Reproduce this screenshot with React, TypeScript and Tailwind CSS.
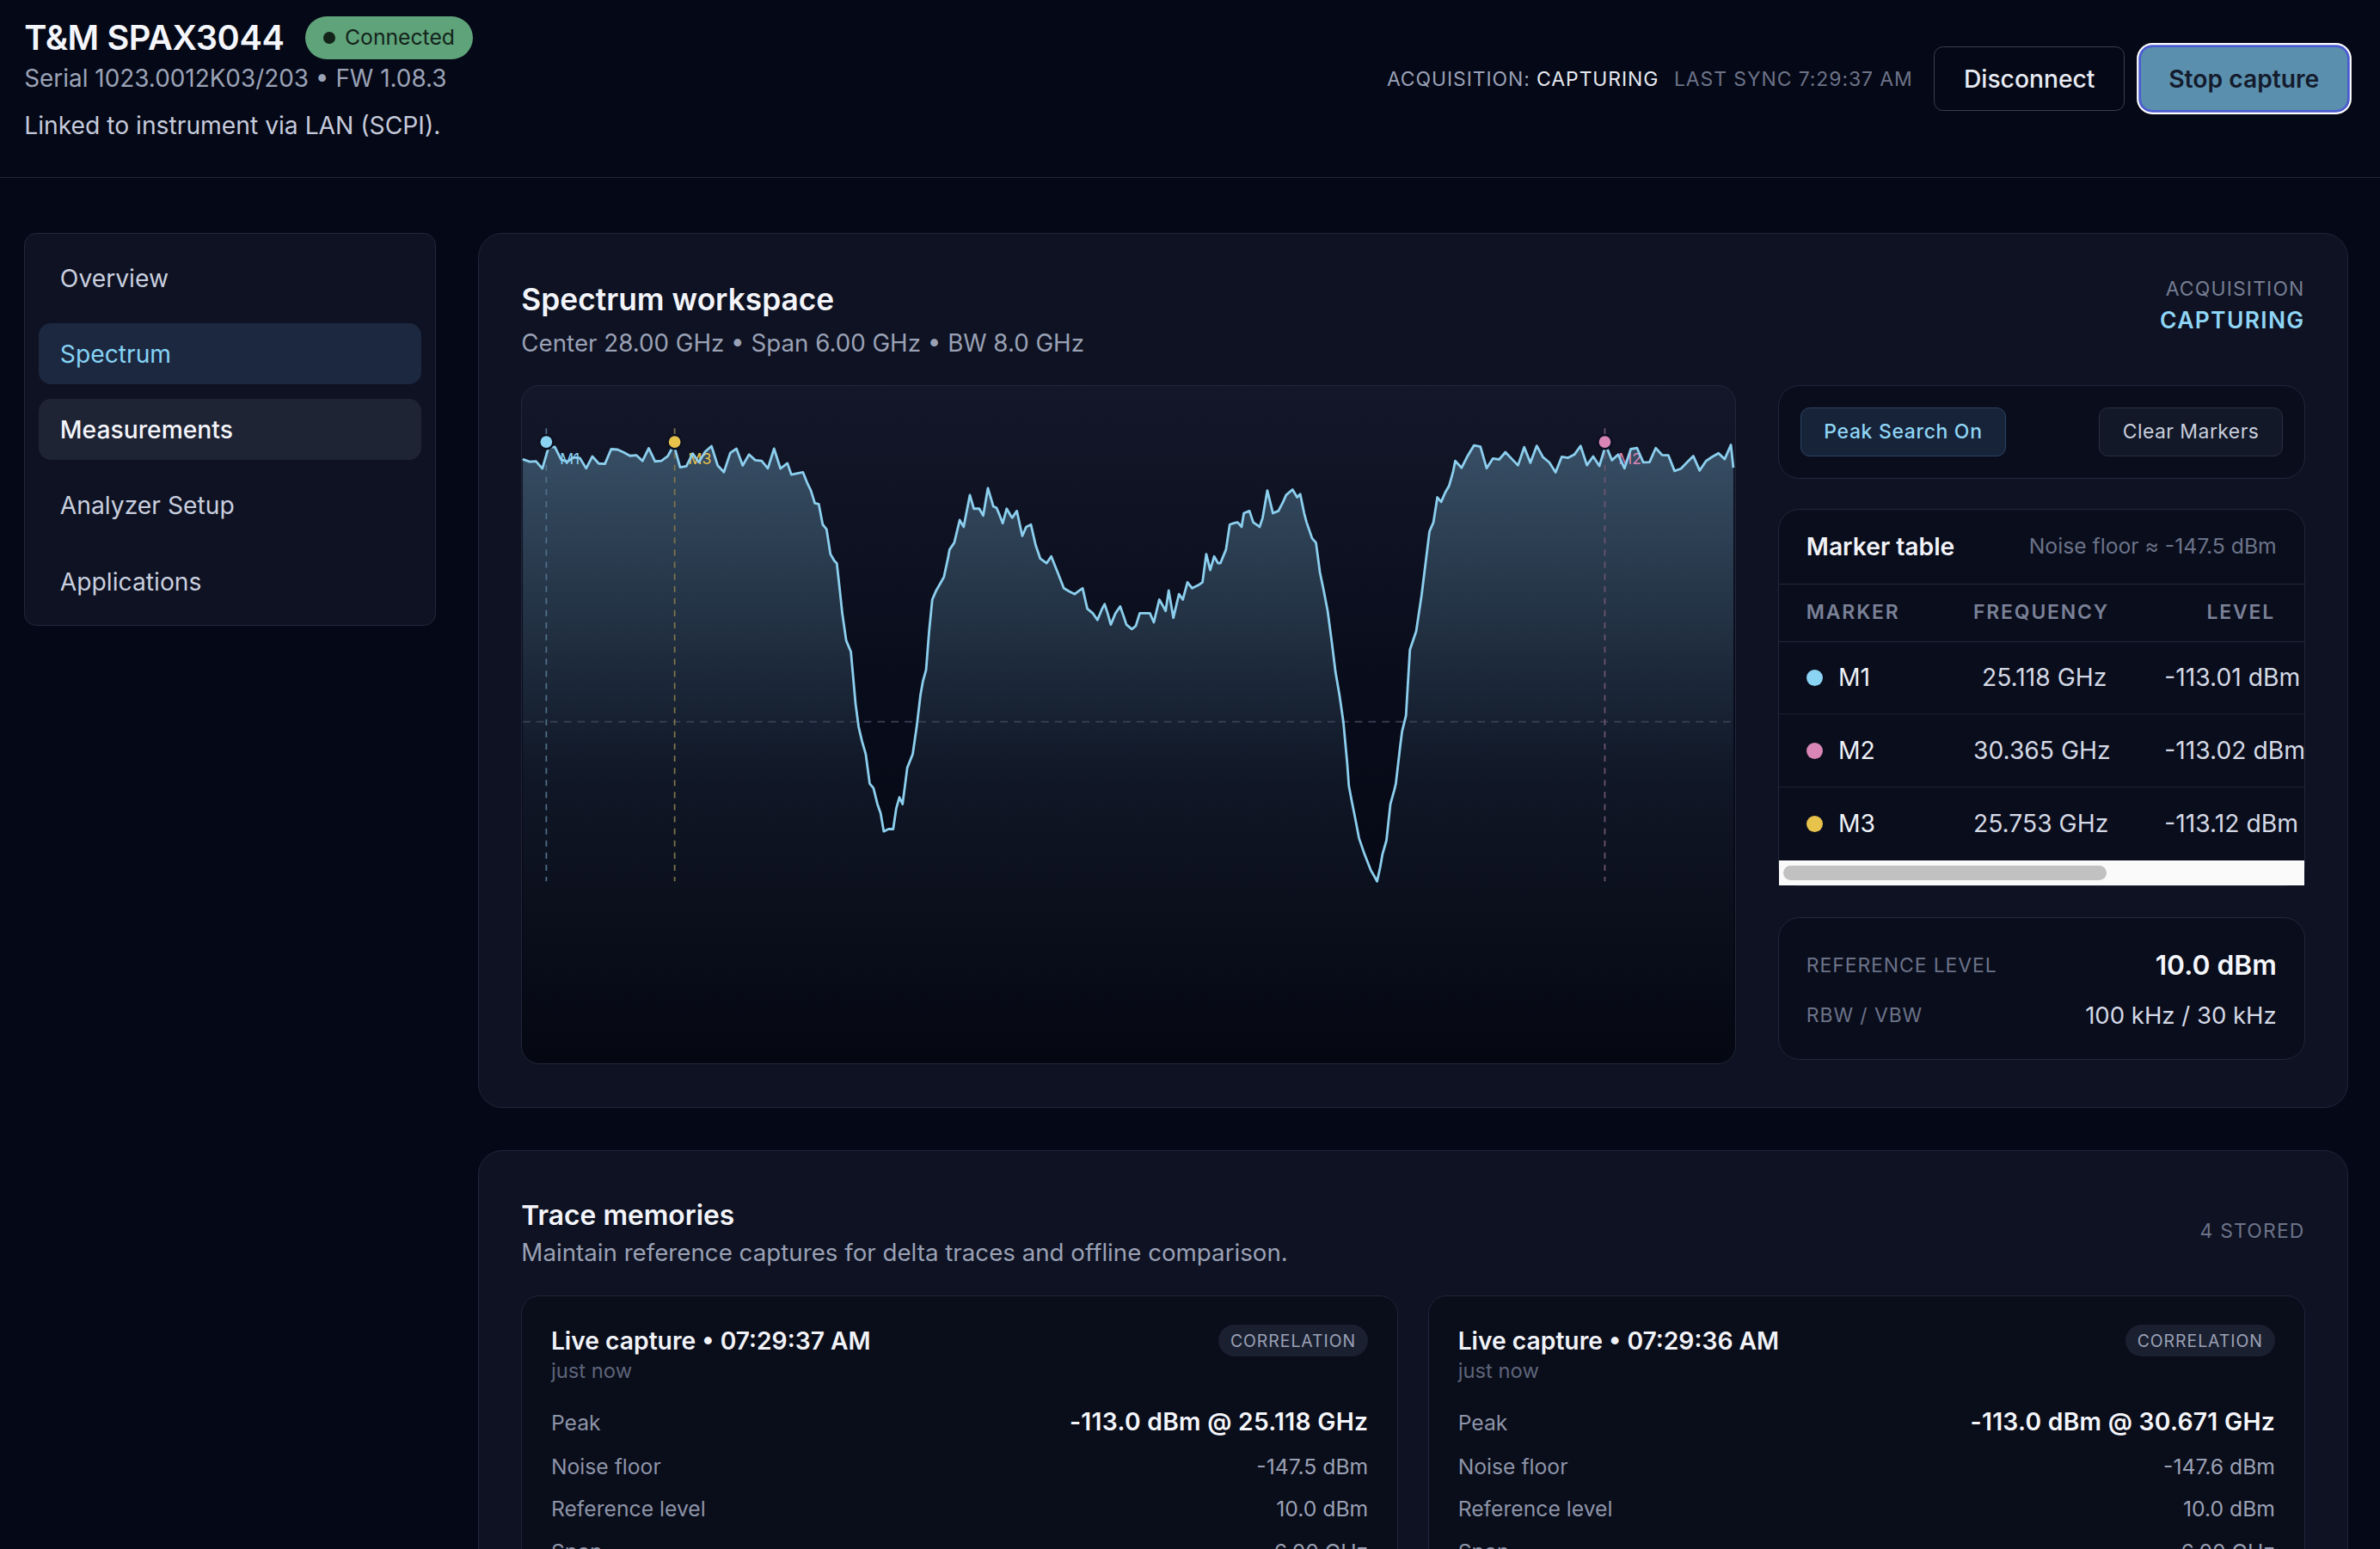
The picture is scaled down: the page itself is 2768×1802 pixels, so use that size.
import React from "react";

const KEY: [number, number][] = [
  [345, 190], [350, 215], [358, 212], [365, 210], [370, 232], [375, 250], [380, 278], [385, 280],
  [390, 325], [395, 335], [400, 390], [405, 405], [408, 410], [412, 470], [415, 520], [420, 580],
  [426, 605], [432, 720], [436, 770], [440, 800], [445, 830], [450, 895], [455, 905], [460, 940],
  [464, 960], [468, 1000], [474, 995], [480, 995], [484, 950], [488, 925], [492, 940], [498, 860],
  [505, 830], [510, 770], [515, 700], [518, 670], [522, 645], [526, 560], [530, 490], [535, 470],
  [540, 455], [545, 440], [550, 400], [552, 380], [558, 365], [565, 315], [570, 330], [578, 260],
  [583, 290], [590, 290], [595, 305], [601, 245], [608, 285], [612, 288], [615, 300], [620, 322],
  [625, 290], [630, 305], [632, 310], [638, 295], [645, 350], [650, 330], [656, 325], [662, 370],
  [668, 400], [676, 410], [682, 395], [690, 430], [698, 465], [705, 472], [712, 478], [718, 470],
  [722, 465], [728, 510], [735, 520], [741, 535], [747, 510], [750, 500], [754, 520], [758, 545],
  [764, 520], [770, 505], [775, 530], [778, 545], [785, 555], [790, 548], [795, 520], [808, 520],
  [813, 540], [820, 490], [825, 505], [828, 515], [832, 470], [838, 530], [845, 478], [850, 490],
  [856, 452], [862, 465], [870, 458], [875, 452], [880, 390], [885, 425], [890, 395], [895, 410],
  [898, 410], [905, 380], [910, 325], [915, 322], [920, 320], [925, 330], [928, 300], [935, 295],
  [940, 320], [948, 330], [952, 310], [958, 250], [965, 300], [972, 295], [978, 275], [982, 260],
  [990, 248], [996, 265], [1000, 258], [1005, 300], [1008, 320], [1015, 355], [1020, 365],
  [1025, 430], [1030, 470], [1035, 515], [1040, 580], [1045, 650], [1050, 700], [1055, 760],
  [1060, 850], [1062, 900], [1066, 935], [1070, 970], [1075, 1015], [1082, 1050], [1090, 1085],
  [1095, 1100], [1098, 1110], [1102, 1080], [1105, 1050], [1110, 1020], [1115, 940], [1120, 910],
  [1122, 895], [1127, 820], [1130, 780], [1135, 745], [1138, 660], [1140, 600], [1148, 560],
  [1155, 480], [1160, 410], [1165, 340], [1170, 320], [1175, 265], [1180, 275], [1185, 255],
  [1190, 240], [1195, 210], [1198, 185],
];

function mulberry32(seed: number) {
  let a = seed;
  return function () {
    a |= 0;
    a = (a + 0x6d2b79f5) | 0;
    let t = Math.imul(a ^ (a >>> 15), 1 | a);
    t = (t + Math.imul(t ^ (t >>> 7), 61 | t)) ^ t;
    return ((t ^ (t >>> 14)) >>> 0) / 4294967296;
  };
}

function buildTrace() {
  const rnd = mulberry32(11);
  const pts: [number, number][] = [];
  const noise = (from: number, to: number, forced: [number, number][]) => {
    for (let zx = from; zx <= to; zx += 8) {
      let zy = 180 + (rnd() - 0.5) * 62;
      for (const [fx, fy] of forced) if (Math.abs(zx - fx) < 4) zy = fy;
      pts.push([zx, zy]);
    }
  };
  noise(0, 340, [[37, 155], [201, 150]]);
  KEY.forEach((p) => pts.push(p));
  noise(1206, 1550, [[1389, 150]]);
  pts.push([1553, 200]);
  return pts.map(([zx, zy]) => [Math.max(0, zx * 0.5167 - 3.66), zy * 0.3 - 6] as [number, number]);
}

const TRACE = buildTrace();
const LINE = TRACE.map(([x, y], i) => `${i === 0 ? "M" : "L"}${x.toFixed(1)} ${y.toFixed(1)}`).join(" ");
const AREA = `${LINE} L799 447 L0 447 Z`;

const MARKERS = [
  { id: "M1", x: 15.5, color: "#8ad3f2", line: "#4f6f89" },
  { id: "M3", x: 100.2, color: "#e8c34c", line: "#7e744a" },
  { id: "M2", x: 714.0, color: "#d986b6", line: "#6c5470" },
];

function SpectrumChart() {
  return (
    <div className="h-[447.5px] min-w-0 flex-1 overflow-hidden rounded-xl border border-[#22273a] bg-gradient-to-b from-[#131729] via-[#080b19] to-[#050712]">
      <svg viewBox="0 0 799 447" className="block h-full w-full">
        <defs>
          <linearGradient id="fillGrad" x1="0" y1="0" x2="0" y2="1">
            <stop offset="0" stopColor="#8fd3f4" stopOpacity="0.3" />
            <stop offset="0.55" stopColor="#8fd3f4" stopOpacity="0.06" />
            <stop offset="1" stopColor="#8fd3f4" stopOpacity="0" />
          </linearGradient>
        </defs>
        <path d={AREA} fill="url(#fillGrad)" />
        <line x1="0" y1="221.7" x2="799" y2="221.7" stroke="#3a4055" strokeWidth="1" strokeDasharray="5 4" />
        {MARKERS.map((m) => (
          <g key={m.id}>
            <line x1={m.x} y1="28" x2={m.x} y2="327" stroke={m.line} strokeWidth="1" strokeDasharray="4 4" />
            <text x={m.x + 9} y="51.5" fontSize="10" fill={m.color} fontFamily="Inter, sans-serif">
              {m.id}
            </text>
          </g>
        ))}
        <path d={LINE} fill="none" stroke="#8ccfee" strokeWidth="1.6" strokeLinejoin="round" />
        {MARKERS.map((m) => (
          <circle key={m.id} cx={m.x} cy="36.9" r="4.6" fill={m.color} stroke="#0d1020" strokeWidth="1.4" />
        ))}
      </svg>
    </div>
  );
}

const NAV = ["Overview", "Spectrum", "Measurements", "Analyzer Setup", "Applications"];

function Sidebar() {
  return (
    <nav className="flex w-[271px] shrink-0 flex-col gap-2.5 rounded-lg border border-[#22273a] bg-[#0e1222] p-[9px]">
      {NAV.map((item) => {
        const cls =
          item === "Spectrum"
            ? "bg-[#1c2840] text-[#86d3f5]"
            : item === "Measurements"
            ? "bg-[#1f2435] font-medium text-[#f3f5fa]"
            : "text-[#c9cfdf]";
        return (
          <div key={item} className={`flex h-10 items-center rounded-lg px-3.5 pt-px text-base leading-[22px] ${cls}`}>
            {item}
          </div>
        );
      })}
    </nav>
  );
}

const ROWS = [
  { id: "M1", color: "#8ad3f2", freq: "25.118 GHz", level: "-113.01 dBm" },
  { id: "M2", color: "#d986b6", freq: "30.365 GHz", level: "-113.02 dBm" },
  { id: "M3", color: "#e8c34c", freq: "25.753 GHz", level: "-113.12 dBm" },
];

function SidePanel() {
  return (
    <div className="flex w-[347px] shrink-0 flex-col gap-5">
      <div className="flex items-center justify-between rounded-[14px] border border-[#22273a] bg-[#0a0d1c] p-3.5">
        <button className="rounded-md border border-[#2b4562] bg-[#172339] px-[15px] py-1.5 text-[13px] leading-[19px] font-medium tracking-[0.03em] text-[#8fd5f5]">
          Peak Search On
        </button>
        <button className="rounded-md border border-[#292f42] bg-[#131828] px-[15px] py-1.5 text-[13px] leading-[19px] tracking-[0.02em] text-[#c9cfdd]">
          Clear Markers
        </button>
      </div>

      <div className="rounded-[14px] border border-[#22273a] bg-[#0a0d1c]">
        <div className="flex items-center justify-between border-b border-[#22273a] px-[18px] py-[13.5px]">
          <span className="text-base leading-[22px] font-semibold text-[#f1f3f8]">Marker table</span>
          <span className="text-[14px] leading-[18px] text-[#6b7389]">Noise floor ≈ -147.5 dBm</span>
        </div>
        <div className="overflow-hidden">
          <div className="flex h-[37.6px] items-center border-b border-[#22273a] pl-[18px] text-[13px] leading-[18px] font-semibold tracking-[0.08em] text-[#7a8197]">
            <span className="w-[110px]">MARKER</span>
            <span className="w-[88px] text-right">FREQUENCY</span>
            <span className="flex-1 pr-[19px] text-right">LEVEL</span>
          </div>
          {ROWS.map((r, i) => (
            <div
              key={r.id}
              className={`flex h-12 items-center pl-[18px] text-base leading-[22px] text-[#d4d9e5] ${
                i < ROWS.length - 1 ? "border-b border-[#1c2133]" : ""
              }`}
            >
              <span className="flex w-[110px] shrink-0 items-center gap-2.5 text-[#eef1f6]">
                <span className="size-[11px] rounded-full" style={{ backgroundColor: r.color }} />
                {r.id}
              </span>
              <span className="w-[88px] shrink-0 whitespace-nowrap text-right">{r.freq}</span>
              <span className="shrink-0 whitespace-nowrap pl-[38px]">{r.level}</span>
            </div>
          ))}
        </div>
        <div className="flex h-[16.7px] items-center bg-[#fafafa] px-[3px]">
          <div className="h-[9.3px] w-[213px] rounded-full bg-[#c1c1c1]" />
        </div>
      </div>

      <div className="flex flex-col gap-2 rounded-[14px] border border-[#22273a] bg-[#0a0d1c] px-[18px] py-[17.5px]">
        <div className="flex h-7 items-center justify-between">
          <span className="text-[13px] uppercase tracking-[0.04em] text-[#6b7389]">Reference level</span>
          <span className="text-lg leading-7 font-semibold text-[#f4f6fb]">10.0 dBm</span>
        </div>
        <div className="flex h-[22px] items-center justify-between">
          <span className="text-[13px] uppercase tracking-[0.04em] text-[#6b7389]">RBW / VBW</span>
          <span className="text-[15.6px] leading-[22px] text-[#d4d9e5]">100 kHz / 30 kHz</span>
        </div>
      </div>
    </div>
  );
}

const MEMS = [
  { time: "07:29:37 AM", peak: "-113.0 dBm @ 25.118 GHz", noise: "-147.5 dBm" },
  { time: "07:29:36 AM", peak: "-113.0 dBm @ 30.671 GHz", noise: "-147.6 dBm" },
  { time: "07:29:35 AM", peak: "-113.1 dBm @ 25.753 GHz", noise: "-147.4 dBm" },
  { time: "07:29:34 AM", peak: "-113.0 dBm @ 30.365 GHz", noise: "-147.5 dBm" },
];

function MemoryCard({ m }: { m: (typeof MEMS)[number] }) {
  return (
    <div className="rounded-xl border border-[#20253a] bg-[#0a0d1a] p-[19px]">
      <div className="flex items-start justify-between">
        <div>
          <div className="text-base leading-[22px] font-semibold text-[#f1f3f8]">Live capture • {m.time}</div>
          <div className="text-[13.5px] leading-[17px] text-[#5d6479]">just now</div>
        </div>
        <span className="rounded-full bg-[#1b2031] px-2 py-[2px] text-[11px] leading-[17px] uppercase tracking-[0.05em] text-[#9aa1b5]">
          Correlation
        </span>
      </div>
      <div className="mt-[14px] flex flex-col gap-2">
        <div className="flex items-baseline justify-between">
          <span className="text-[14px] leading-[22px] text-[#8d94a8]">Peak</span>
          <span className="text-base leading-[22px] font-semibold tracking-[0.01em] text-[#f4f6fb]">{m.peak}</span>
        </div>
        <div className="flex items-baseline justify-between text-[14px] leading-5">
          <span className="text-[#8d94a8]">Noise floor</span>
          <span className="text-[#9aa1b5]">{m.noise}</span>
        </div>
        <div className="flex items-baseline justify-between text-[14px] leading-5">
          <span className="text-[#8d94a8]">Reference level</span>
          <span className="text-[#9aa1b5]">10.0 dBm</span>
        </div>
        <div className="flex items-baseline justify-between text-[14px] leading-5">
          <span className="text-[#8d94a8]">Span</span>
          <span className="text-[#9aa1b5]">6.00 GHz</span>
        </div>
      </div>
    </div>
  );
}

export default function App() {
  return (
    <div className="h-screen overflow-hidden bg-[#050816]">
      <div className="[zoom:1.765] [font-family:Inter,'Noto_Sans',sans-serif] text-[#e5e8f0] antialiased">
        <header className="flex items-center justify-between border-b border-[#22273a] pt-[9px] pr-[21px] pb-[22px] pl-4">
          <div>
            <div className="flex items-center gap-3.5">
              <h1 className="text-[22.5px] leading-8 font-semibold tracking-[-0.01em] text-[#f4f6fb]">T&amp;M SPAX3044</h1>
              <span className="flex items-center gap-1.5 rounded-full bg-[#5fa37a] px-3 py-1 text-sm leading-5 text-[#13231a]">
                <span className="size-2 rounded-full bg-[#13231a]" />
                Connected
              </span>
            </div>
            <p className="text-[15.8px] leading-[22px] text-[#9ba3b7]">Serial 1023.0012K03/203 • FW 1.08.3</p>
            <p className="mt-2 text-base leading-6 text-[#c5cbdc]">Linked to instrument via LAN (SCPI).</p>
          </div>
          <div className="flex items-center">
            <span className="text-[13px] uppercase tracking-[0.04em] text-[#9aa0b5]">
              Acquisition: <span className="text-[#e6e9f1]">Capturing</span>
            </span>
            <span className="ml-2.5 text-[13px] uppercase tracking-[0.04em] text-[#6c7388]">Last sync 7:29:37 AM</span>
            <button className="ml-3.5 h-[42.5px] rounded-md border border-[#394052] px-[19px] text-base font-medium text-[#e8ebf3]">
              Disconnect
            </button>
            <button className="ml-2.5 h-[42.5px] rounded-lg border border-[#4b5bd0] bg-[#5a90ad] px-[18.5px] text-base font-semibold text-[#141b2d] shadow-[0_0_0_1px_#4b5bd0,0_0_0_2.2px_#ffffff]">
              Stop capture
            </button>
          </div>
        </header>

        <div className="flex items-start gap-7 pt-9 pr-[21px] pl-4">
          <Sidebar />
          <div className="flex min-w-0 flex-1 flex-col gap-7">
            <section className="rounded-2xl border border-[#20253a] bg-[#0e1222] p-7">
              <div className="flex items-start justify-between">
                <div>
                  <h2 className="text-xl leading-8 font-semibold text-[#f3f5fa]">Spectrum workspace</h2>
                  <p className="mt-px text-[15.7px] leading-[22px] text-[#9aa1b5]">
                    Center 28.00 GHz • Span 6.00 GHz • BW 8.0 GHz
                  </p>
                </div>
                <div className="text-right">
                  <div className="text-[13px] leading-[18px] uppercase tracking-[0.05em] text-[#767d92]">Acquisition</div>
                  <div className="text-[15px] leading-[22px] font-semibold uppercase tracking-[0.05em] text-[#8fd5f5]">
                    Capturing
                  </div>
                </div>
              </div>
              <div className="mt-[17px] flex gap-7">
                <SpectrumChart />
                <SidePanel />
              </div>
            </section>

            <section className="rounded-2xl border border-[#20253a] bg-[#0e1222] p-7">
              <div className="flex items-center justify-between">
                <div>
                  <h2 className="text-lg leading-7 font-semibold text-[#f3f5fa]">Trace memories</h2>
                  <p className="text-[15.7px] leading-[22px] text-[#9aa1b5]">
                    Maintain reference captures for delta traces and offline comparison.
                  </p>
                </div>
                <span className="text-[13px] leading-[18px] uppercase tracking-[0.05em] text-[#6b7389]">4 stored</span>
              </div>
              <div className="mt-[17px] grid grid-cols-2 gap-5">
                {MEMS.map((m) => (
                  <MemoryCard key={m.time} m={m} />
                ))}
              </div>
            </section>
          </div>
        </div>
      </div>
    </div>
  );
}
